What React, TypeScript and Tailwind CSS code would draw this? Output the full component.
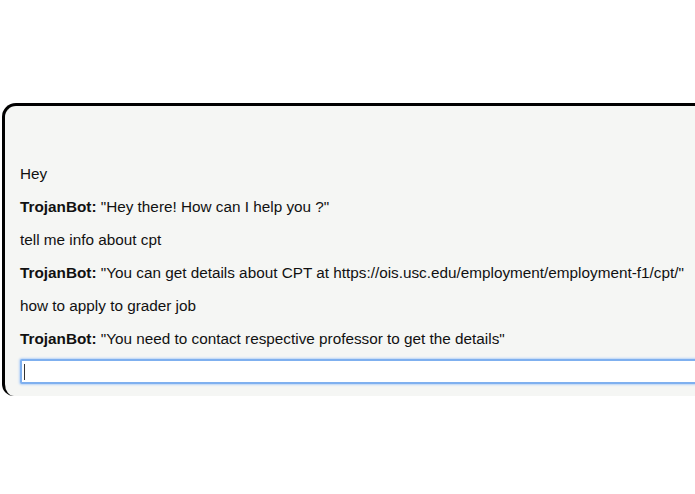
const chat = [
  { from: "user", text: "Hey" },
  { from: "bot", text: '"Hey there! How can I help you ?"' },
  { from: "user", text: "tell me info about cpt" },
  {
    from: "bot",
    text: '"You can get details about CPT at https://ois.usc.edu/employment/employment-f1/cpt/"',
  },
  { from: "user", text: "how to apply to grader job" },
  { from: "bot", text: '"You need to contact respective professor to get the details"' },
];

export default function App() {
  return (
    <div className="h-[494px] w-[695px] overflow-hidden bg-white font-['Liberation_Sans',Arial,sans-serif] text-[15.3px] text-[#111]">
      <div className="ml-[2px] mt-[103px] w-[740px] rounded-tl-[14px] rounded-bl-[12px] border-l-[3px] border-t-[3px] border-black bg-[#f5f6f4] pl-[15px] pt-[59px] pb-[12px]">
        <div className="flex flex-col gap-[15px]">
          {chat.map((m, i) => (
            <p key={i} className="whitespace-nowrap leading-[18px]">
              {m.from === "bot" && <b>TrojanBot: </b>}
              {m.text}
            </p>
          ))}
        </div>
        <div className="mt-[11px] h-[25px] w-full rounded-[2px] border-2 border-[#7fb0ef] bg-white shadow-[0_0_2px_1px_#b9d4f7]">
          <div className="ml-[2px] mt-[3px] h-[16px] w-[1px] bg-[#333]" />
        </div>
      </div>
    </div>
  );
}
